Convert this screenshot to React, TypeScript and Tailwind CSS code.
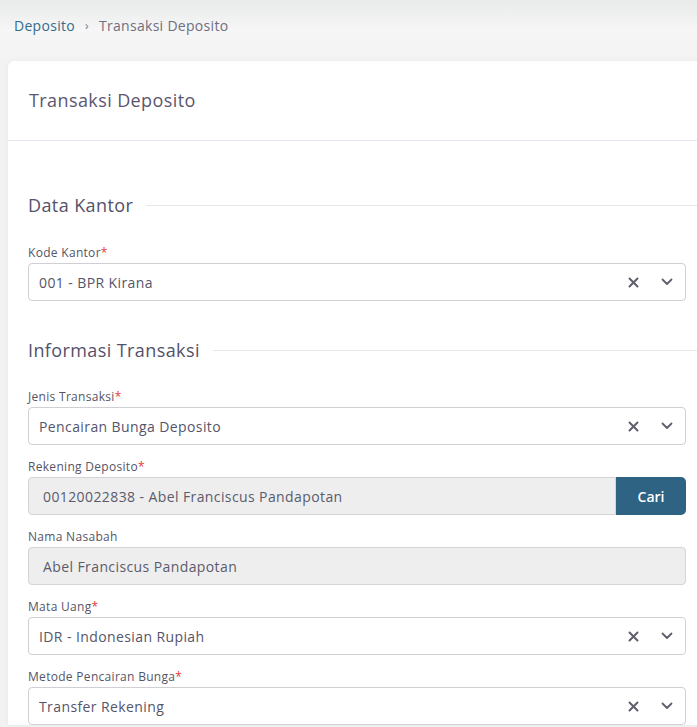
import React from "react";

const font = { fontFamily: '"Open Sans", "Noto Sans", sans-serif' };

function XIcon() {
  return (
    <svg width="11" height="11" viewBox="0 0 11 11" className="shrink-0">
      <path d="M1.5 1.5 L9.5 9.5 M9.5 1.5 L1.5 9.5" stroke="#5f5f6b" strokeWidth="2" strokeLinecap="round" />
    </svg>
  );
}

function ChevronIcon() {
  return (
    <svg width="12" height="8" viewBox="0 0 12 8" className="shrink-0">
      <path d="M1.5 1.5 L6 6 L10.5 1.5" stroke="#5f5f6b" strokeWidth="1.8" fill="none" strokeLinecap="round" strokeLinejoin="round" />
    </svg>
  );
}

function Label({ text, required = true }: { text: string; required?: boolean }) {
  return (
    <div className="text-[12px] leading-[18px] tracking-[0.3px] text-[#555566] mb-[1px]">
      {text}
      {required && <span className="text-[#e53935]">*</span>}
    </div>
  );
}

function SelectField({ label, value }: { label: string; value: string }) {
  return (
    <div className="flex flex-col">
      <Label text={label} />
      <div className="h-[38px] flex items-center border border-[#cfcfd4] rounded-[4px] bg-white pl-[10px] pr-[12px] w-[658px]">
        <span className="flex-1 text-[14px] tracking-[0.4px] text-[#55556a]">{value}</span>
        <div className="flex items-center gap-[22px]">
          <XIcon />
          <ChevronIcon />
        </div>
      </div>
    </div>
  );
}

function SectionHeading({ text }: { text: string }) {
  return (
    <div className="flex items-center gap-[13px]">
      <span className="text-[18px] leading-[24px] tracking-[0.4px] text-[#54516a] font-medium whitespace-nowrap">{text}</span>
      <div className="flex-1 h-px bg-[#e6e6ea]" />
    </div>
  );
}

export default function App() {
  return (
    <div className="w-[697px] h-[727px] overflow-hidden bg-[#f2f2f2]" style={font}>
      <div className="bg-gradient-to-b from-[#e9eaea] via-[#f6f6f6] to-[#f3f3f3]">
        <div className="h-[61px] px-[14px] pt-[15px] flex items-start text-[14px] leading-[22px] tracking-[0.3px]">
          <span className="text-[#336b8c]">Deposito</span>
          <span className="text-[#777788] mx-[10px] text-[12px]">›</span>
          <span className="text-[#6e6e80]">Transaksi Deposito</span>
        </div>
      </div>
      <div className="ml-[8px] w-[710px] bg-white rounded-tl-[6px] shadow-[0_0_6px_rgba(0,0,0,0.04)]">
        <div className="h-[80px] px-[21px] flex items-center border-b border-[#e6e4ee]">
          <span className="text-[18px] tracking-[0.4px] text-[#5a5670]">Transaksi Deposito</span>
        </div>
        <div className="pl-[20px] pt-[52px] flex flex-col">
          <SectionHeading text="Data Kantor" />
          <div className="mt-[27px] flex flex-col">
            <SelectField label="Kode Kantor" value="001 - BPR Kirana" />
          </div>
          <div className="mt-[37px]">
            <SectionHeading text="Informasi Transaksi" />
          </div>
          <div className="mt-[26px] flex flex-col gap-[13px]">
            <SelectField label="Jenis Transaksi" value="Pencairan Bunga Deposito" />
            <div className="flex flex-col">
              <Label text="Rekening Deposito" />
              <div className="flex w-[658px] h-[38px]">
                <div className="flex-1 flex items-center bg-[#eeeeef] border border-[#d3d3d8] rounded-l-[4px] pl-[14px] text-[14px] tracking-[0.4px] text-[#5b5b6b]">
                  00120022838 - Abel Franciscus Pandapotan
                </div>
                <button className="w-[70px] bg-[#2e6384] text-white text-[14px] font-semibold rounded-r-[5px]">Cari</button>
              </div>
            </div>
            <div className="flex flex-col">
              <Label text="Nama Nasabah" required={false} />
              <div className="w-[658px] h-[38px] flex items-center bg-[#eeeeef] border border-[#d3d3d8] rounded-[4px] pl-[14px] text-[14px] tracking-[0.4px] text-[#5b5b6b]">
                Abel Franciscus Pandapotan
              </div>
            </div>
            <SelectField label="Mata Uang" value="IDR - Indonesian Rupiah" />
            <SelectField label="Metode Pencairan Bunga" value="Transfer Rekening" />
          </div>
        </div>
      </div>
    </div>
  );
}
